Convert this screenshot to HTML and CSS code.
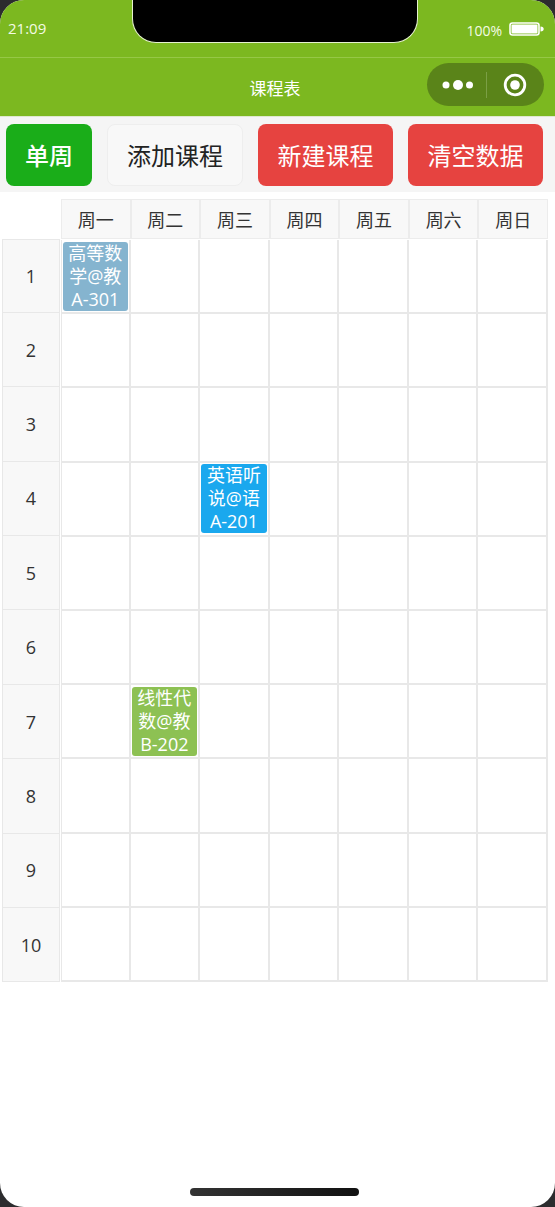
FILE: index.html
```html
<!doctype html>
<html lang="zh-CN">
  <head>
    <meta charset="UTF-8" />
    <meta name="viewport" content="width=device-width, initial-scale=1.0" />
    <title>课程表</title>
    <link rel="stylesheet" href="styles.css">
  </head>
  <body>
    <div class="screen">
      <div class="notch"></div>
      <div class="status-bar">
        <span class="status-time">21:09</span>
        <div class="status-right">
          <span class="status-battery-text">100%</span>
          <svg class="battery" width="36" height="14" viewBox="0 0 36 14">
            <rect x="1" y="1" width="29" height="12" rx="2.5" fill="none" stroke="#fff" stroke-width="1.6"/>
            <rect x="2.500" y="2.500" width="26" height="9" rx="1" fill="#fff"/>
            <path d="M31.500 4.500c2.200 0 3.200 1 3.200 2.500s-1 2.500-3.200 2.500z" fill="#fff"/>
          </svg>
        </div>
      </div>
      <div class="nav-bar">
        <span class="nav-title">课程表</span>
        <div class="capsule">
          <svg width="44" height="14" viewBox="0 0 44 14">
            <circle cx="6" cy="7" r="3.500" fill="#fff"/>
            <circle cx="18" cy="7" r="5" fill="#fff"/>
            <circle cx="29.500" cy="7" r="3.500" fill="#fff"/>
          </svg>
          <span class="capsule-line"></span>
          <svg width="24" height="24" viewBox="0 0 24 24">
            <circle cx="12" cy="12" r="9.800" fill="none" stroke="#fff" stroke-width="2.800"/>
            <circle cx="12" cy="12" r="4.800" fill="#fff"/>
          </svg>
        </div>
      </div>

      <div class="toolbar">
        <button class="btn btn-green">单周</button>
        <button class="btn btn-plain">添加课程</button>
        <button class="btn btn-red">新建课程</button>
        <button class="btn btn-red">清空数据</button>
      </div>

      <div class="timetable">
        <div class="time-col">
          <div class="time-head"></div>
          <div class="time-cell">1</div>
          <div class="time-cell">2</div>
          <div class="time-cell">3</div>
          <div class="time-cell">4</div>
          <div class="time-cell">5</div>
          <div class="time-cell">6</div>
          <div class="time-cell">7</div>
          <div class="time-cell">8</div>
          <div class="time-cell">9</div>
          <div class="time-cell">10</div>
        </div>
        <div class="week-grid">
          <div class="day">周一</div><div class="day">周二</div><div class="day">周三</div><div class="day">周四</div><div class="day">周五</div><div class="day">周六</div><div class="day">周日</div>

          <div class="cell"><div class="course course-blue">高等数学@教A-301</div></div><div class="cell"></div><div class="cell"></div><div class="cell"></div><div class="cell"></div><div class="cell"></div><div class="cell"></div>
          <div class="cell"></div><div class="cell"></div><div class="cell"></div><div class="cell"></div><div class="cell"></div><div class="cell"></div><div class="cell"></div>
          <div class="cell"></div><div class="cell"></div><div class="cell"></div><div class="cell"></div><div class="cell"></div><div class="cell"></div><div class="cell"></div>
          <div class="cell"></div><div class="cell"></div><div class="cell"><div class="course course-sky">英语听说@语A-201</div></div><div class="cell"></div><div class="cell"></div><div class="cell"></div><div class="cell"></div>
          <div class="cell"></div><div class="cell"></div><div class="cell"></div><div class="cell"></div><div class="cell"></div><div class="cell"></div><div class="cell"></div>
          <div class="cell"></div><div class="cell"></div><div class="cell"></div><div class="cell"></div><div class="cell"></div><div class="cell"></div><div class="cell"></div>
          <div class="cell"></div><div class="cell"><div class="course course-lime">线性代数@教B-202</div></div><div class="cell"></div><div class="cell"></div><div class="cell"></div><div class="cell"></div><div class="cell"></div>
          <div class="cell"></div><div class="cell"></div><div class="cell"></div><div class="cell"></div><div class="cell"></div><div class="cell"></div><div class="cell"></div>
          <div class="cell"></div><div class="cell"></div><div class="cell"></div><div class="cell"></div><div class="cell"></div><div class="cell"></div><div class="cell"></div>
          <div class="cell"></div><div class="cell"></div><div class="cell"></div><div class="cell"></div><div class="cell"></div><div class="cell"></div><div class="cell"></div>
        </div>
      </div>

      <div class="home-bar"></div>
    </div>
  </body>
</html>
```

FILE: styles.css
```css
* {
  box-sizing: border-box;
}
html,
body {
  margin: 0;
  padding: 0;
  height: 100%;
  overflow: hidden;
  background-color: #2c2c2e;
}
body {
  font-family: "Open Sans", "Noto Sans CJK SC", sans-serif;
}
.screen {
  position: relative;
  width: 555px;
  height: 1207px;
  background-color: #fff;
  border-radius: 24px;
  overflow: hidden;
}
.notch {
  position: absolute;
  top: -1px;
  left: 132px;
  width: 286px;
  height: 44px;
  background-color: #000;
  border: 1px solid #e6f2d0;
  border-top: none;
  border-radius: 0 0 24px 24px;
}
.status-bar {
  display: flex;
  justify-content: space-between;
  height: 58px;
  padding: 18px 10px 0 8px;
  background-color: #7cb820;
  border-bottom: 1px solid #96c846;
  color: #fff;
  font-size: 14px;
}
.status-time {
  font-size: 15px;
  line-height: 20px;
  color: #f4fbe4;
}
.status-right {
  display: flex;
  align-items: flex-start;
  gap: 7px;
  margin-top: 4px;
}
.status-battery-text {
  line-height: 18px;
  color: #f4fbe4;
}
.nav-bar {
  position: relative;
  display: flex;
  align-items: center;
  justify-content: center;
  height: 59px;
  padding-right: 5px;
  background-color: #7cb820;
  border-bottom: 1px solid #dfe8cf;
}
.nav-title {
  font-size: 17px;
  color: #fff;
}
.capsule {
  position: absolute;
  top: 5px;
  left: 427px;
  width: 117px;
  height: 43px;
  display: flex;
  align-items: center;
  padding-left: 13px;
  background-color: #5a8419;
  border-radius: 22px;
}
.capsule-line {
  width: 1px;
  height: 26px;
  margin: 0 16px 0 2px;
  background-color: #7b9f45;
}
.toolbar {
  display: flex;
  justify-content: space-between;
  height: 75px;
  padding: 7px 12px 6px 6px;
  background-color: #f5f5f5;
}
.btn {
  width: 135px;
  height: 62px;
  padding: 0 0 2px;
  border: none;
  border-radius: 8px;
  font-family: inherit;
  font-size: 24px;
  color: #fff;
}
.btn-green {
  width: 86px;
  background-color: #1aad19;
  font-weight: 500;
}
.btn-plain {
  width: 136px;
  background-color: #f8f8f8;
  border: 1px solid #eeeeee;
  color: #222;
}
.btn-red {
  background-color: #e64340;
}
.timetable {
  display: flex;
  align-items: flex-start;
  padding: 7px 7px 0 2px;
}
.time-col {
  width: 58px;
  flex-shrink: 0;
}
.time-head {
  height: 39.500px;
}
.time-cell {
  display: flex;
  align-items: center;
  justify-content: center;
  height: 74.400px;
  background-color: #f8f8f8;
  border: 1px solid #e8e8e8;
  border-top-width: 0;
  font-size: 18px;
  color: #333;
}
.time-cell:nth-child(2) {
  border-top-width: 1px;
}
.week-grid {
  flex: 1;
  display: grid;
  grid-template-columns: repeat(7, 1fr);
  grid-template-rows: 41px repeat(10, 74.200px);
  margin-left: 1px;
}
.day {
  display: flex;
  align-items: center;
  justify-content: center;
  height: 40px;
  background-color: #f8f8f8;
  border: 1px solid #ececec;
  font-size: 18px;
  color: #333;
}
.cell {
  padding: 1.500px 1px 1.500px;
  border-right: 2px solid #e8e8e8;
  border-bottom: 2px solid #e8e8e8;
}
.cell:nth-child(7n + 1) {
  border-left: 1px solid #e8e8e8;
}
.course {
  height: 100%;
  padding: 0 4px;
  border-radius: 3px;
  overflow: hidden;
  font-size: 18px;
  line-height: 23px;
  text-align: center;
  color: #fff;
}
.course-blue {
  background-color: #85b4cf;
}
.course-sky {
  background-color: #1aa8ee;
}
.course-lime {
  background-color: #8dc153;
}
.home-bar {
  position: absolute;
  left: 190px;
  bottom: 11px;
  width: 169px;
  height: 8px;
  background: linear-gradient(to right, #333, #111);
  border-radius: 4px;
}
```
